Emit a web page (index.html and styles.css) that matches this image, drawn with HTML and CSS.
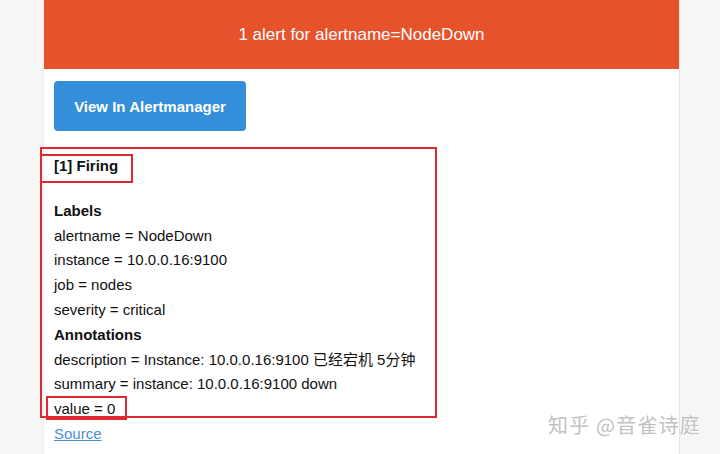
FILE: index.html
```html
<!DOCTYPE html>
<html lang="zh">
<head>
<meta charset="utf-8">
<link rel="stylesheet" href="styles.css">
</head>
<body>
<div class="page">
  <div class="mail">
    <div class="header">1 alert for alertname=NodeDown</div>
    <div class="content">
      <a class="btn">View In Alertmanager</a>
      <div class="alert">
        <div class="firing"><strong>[1] Firing</strong></div>
        <div class="group-title">Labels</div>
        <div class="line">alertname = NodeDown</div>
        <div class="line">instance = 10.0.0.16:9100</div>
        <div class="line">job = nodes</div>
        <div class="line">severity = critical</div>
        <div class="group-title">Annotations</div>
        <div class="line">description = Instance: 10.0.0.16:9100 已经宕机 5分钟</div>
        <div class="line">summary = instance: 10.0.0.16:9100 down</div>
        <div class="line">value = 0</div>
        <div class="line"><a class="source">Source</a></div>
      </div>
    </div>
  </div>
  <div class="mark mark-outer"></div>
  <div class="mark mark-firing"></div>
  <div class="mark mark-value"></div>
  <div class="watermark">知乎 @音雀诗庭</div>
</div>
</body>
</html>
```

FILE: styles.css
```css
html, body {
  margin: 0;
  padding: 0;
  background: #f6f6f6;
  font-family: "Liberation Sans", Arial, "Noto Sans CJK SC", sans-serif;
  color: #111;
}
.page {
  position: relative;
  width: 720px;
  height: 454px;
  overflow: hidden;
}
.mail {
  margin-left: 43px;
  width: 637px;
  height: 454px;
  background: #fff;
  border-right: 1px solid #e4e4e4;
  border-left: 1px solid #ececec;
  box-sizing: border-box;
}
.header {
  height: 69px;
  background: #e6522c;
  color: #fff;
  font-size: 17px;
  display: flex;
  align-items: center;
  justify-content: center;
}
.content {
  padding: 12px 0 0 10px;
}
.btn {
  display: flex;
  align-items: center;
  justify-content: center;
  width: 192px;
  height: 50px;
  background: #348eda;
  border-radius: 4px;
  color: #fff;
  font-weight: bold;
  font-size: 15px;
}
.alert {
  font-size: 15px;
  line-height: 24.8px;
}
.firing {
  margin-top: 23px;
  margin-bottom: 20px;
}
.group-title {
  font-weight: bold;
}
.source {
  color: #4a8fd6;
  text-decoration: underline;
}
.mark {
  position: absolute;
  border: 2px solid #dc2b30;
  box-sizing: border-box;
}
.mark-outer {
  left: 40px;
  top: 147px;
  width: 397px;
  height: 271px;
}
.mark-firing {
  left: 40px;
  top: 154px;
  width: 93px;
  height: 29px;
}
.mark-value {
  left: 46px;
  top: 396px;
  width: 81px;
  height: 24px;
}
.watermark {
  position: absolute;
  left: 548px;
  top: 411px;
  font-family: "Noto Sans CJK SC", sans-serif;
  font-size: 20px;
  line-height: 28px;
  color: #c2c2c2;
  text-shadow: 1px 1px 0 #fff;
  letter-spacing: 1.2px;
}
```
